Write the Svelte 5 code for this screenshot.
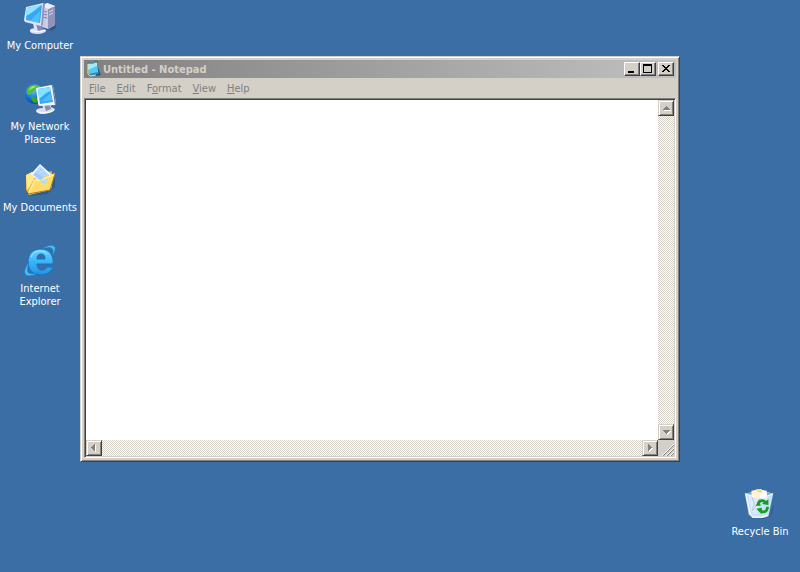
<script lang="ts">
	type Shortcut = { id: string; label: string };

	const shortcuts: Shortcut[] = [
		{ id: 'computer', label: 'My Computer' },
		{ id: 'network', label: 'My Network Places' },
		{ id: 'documents', label: 'My Documents' },
		{ id: 'explorer', label: 'Internet Explorer' }
	];

	// the access key is the underlined letter
	const menus = [
		{ before: '', key: 'F', after: 'ile' },
		{ before: '', key: 'E', after: 'dit' },
		{ before: 'F', key: 'o', after: 'rmat' },
		{ before: '', key: 'V', after: 'iew' },
		{ before: '', key: 'H', after: 'elp' }
	];

	let text = $state('');
</script>

{#snippet icon(id: string)}
	<svg class="icon" viewBox="0 0 32 32" aria-hidden="true">
		{#if id === 'computer'}
			<path d="M18 26l10 3 5-4v-3z" fill="#203d6c" opacity=".4" />
			<path d="M18 4l5-3 8 3v19l-7 4-6-2z" fill="#c9cce6" />
			<path d="M24 7l7-3v19l-7 4z" fill="#8f92ba" />
			<path d="M18 4l5-3 8 3-7 3z" fill="#eeeef9" />
			<path d="M19 9l4 1M19 12l4 1M19 15l4 1" stroke="#777ba8" />
			<path d="M25 10l4-2M25 13l4-2" stroke="#d9dbef" />
			<path d="M9 21l8 1 1 5 4 1c1 2-4 4-9 4-6 0-9-3-6-5l3-1z" fill="#dddff0" />
			<path d="M12 22l6 1 1 5-5 1z" fill="#8588b2" />
			<path d="M7 28c3 2 9 2 14 0" fill="none" stroke="#fff" />
			<path d="M2 5l17-4 2 1-2 21-2 1L1 20 0 18z" fill="#dfe2f4" />
			<path d="M19 1l2 1-2 21-2 1z" fill="#9195bd" />
			<path d="M3 6l15-3-2 18L2 18z" fill="#38a7f3" />
			<path d="M3 6l15-3C13 6 7 12 2 14z" fill="#8be6ff" />
			<path d="M6 19l10-10-1 12z" fill="#5acbff" opacity=".7" />
		{:else if id === 'network'}
			<defs>
				<radialGradient id="sea" cx=".4" cy=".3" r=".7">
					<stop offset="0" stop-color="#7cc4ff" />
					<stop offset=".5" stop-color="#1f80ea" />
					<stop offset="1" stop-color="#0b3f9c" />
				</radialGradient>
			</defs>
			<circle cx="11" cy="11" r="10" fill="url(#sea)" />
			<path d="M5 4c4-3 9-3 12 0l-2 1-4 1-1 3-3 1-1 2-3-1c-1-3 0-5 2-7z" fill="#4fc136" />
			<path d="M7 13l4 1 3 3-2 3c-3 0-5-3-5-7z" fill="#39a824" />
			<path d="M6 5c2-2 4-2 6-2l-2 2-3 1-2 2z" fill="#a8e672" />
			<path d="M18 21l8-2 1 5 4 2c0 4-17 8-19 2 0-2 3-3 7-3z" fill="#dcddeb" />
			<path d="M20 21l5-1 2 6-5 2z" fill="#8b8db0" />
			<path d="M13 28c4 3 13 2 17-1" fill="none" stroke="#fff" />
			<path d="M12 5l15-3 2 1 3 17-1 2-16 1-1-2z" fill="#f5f7fe" />
			<path d="M28 3l1 0 3 17-1 2z" fill="#6773a3" />
			<path d="M14 6l12-2 3 15-13 2z" fill="#35a7f2" />
			<path d="M14 6l12-2 1 4c-5 1-8 5-12 8z" fill="#83e2ff" />
			<path d="M17 19l10-9 1 7z" fill="#64c9ff" opacity=".6" />
		{:else if id === 'documents'}
			<path d="M4 29l22-2 5-15v11l-8 7-16 2z" fill="#203d6c" opacity=".4" />
			<path d="M2 11l6-3 5 2 15-3v17L5 30 2 26z" fill="#e4ac34" />
			<path d="M2 11l6-3 5 2-2 3-6 11-2 2z" fill="#ffe98f" />
			<path d="M16 0l12 11-5 14L7 10z" fill="#f7fbff" />
			<path d="M16 2l9 9-3 10L9 11z" fill="#a4d0f8" />
			<path d="M16 2l9 9-4 3-9-6z" fill="#b9dcfc" />
			<path d="M12 9l8 7M14 7l8 7M16 5l7 7" stroke="#8bbdf0" stroke-dasharray="1 1" />
			<path d="M4 29l6-14 7 1 3-3 11-4-5 17-21 5z" fill="#ffdc69" />
			<path d="M5 28l6-12 6 1 4-3 9-3" fill="none" stroke="#fff6b9" />
			<path d="M4 30l22-4 5-16" fill="none" stroke="#ad761b" />
			<path d="M15 17l9-2-3 6z" fill="#b2dfef" />
		{:else if id === 'explorer'}
			<defs>
				<linearGradient id="ie" x1="0" y1="0" x2="0" y2="1">
					<stop offset="0" stop-color="#6ad8ff" />
					<stop offset=".5" stop-color="#3bb4f8" />
					<stop offset="1" stop-color="#2090e4" />
				</linearGradient>
			</defs>
			<path
				d="M29 19H13c0 4 2 6 5 6 2 0 4-1 5-3h6c-2 5-6 8-12 8C9 30 4 25 4 17S9 4 17 4c8 0 13 6 12 15zM13 14h8c0-3-1-5-4-5s-4 2-4 5z"
				fill="url(#ie)"
				fill-rule="evenodd"
				stroke="#1672bd"
				stroke-width="1"
			/>
			<path
				d="M18 4C23 0 29-1 31 2c1 3-1 6-3 9 1-4 2-6-1-8-2-1-5 0-9 1zM5 17C1 22-1 28 2 30c3 2 9 0 12-2-5 1-9 1-10-1-1-2 0-6 1-10z"
				fill="#42bdf8"
				stroke="#1672bd"
				stroke-width=".5"
			/>
			<path d="M7 12c2-4 5-6 9-6 3 0 5 1 7 3" fill="none" stroke="#9be7ff" />
		{:else if id === 'recycle'}
			<g transform="scale(.94)">
				<path d="M9 30l15 2 6-5 2-12-4 15-8 3z" fill="#203d6c" opacity=".5" />
				<path d="M1 6L18 2l13 4-5 24-6 2H9l-4-4z" fill="#d1e2f2" />
				<path d="M2 6L18 2l12 4-9 4z" fill="#86acd3" />
				<path d="M8 3l9-2 3 5-5 10-7-5z" fill="#fff5d2" />
				<path d="M18 2l6 1 1 8-9 4z" fill="#fff" />
				<path d="M13 1l6 0v4l-5-1z" fill="#ffd778" />
				<path d="M4 8l7 2 5 9-3 10-5-4z" fill="#f5f4fa" />
				<path d="M8 9l3 7-2 8 5-6 3-7" fill="none" stroke="#aaa9cd" />
				<path d="M2 6l5 22 3 3h9l6-2 5-23-9 5-9-1z" fill="#c5e0f7" opacity=".5" />
				<path d="M1 6l11 4h9l10-4" fill="none" stroke="#f6fcff" />
				<path d="M2 7l5 21 3 3h9l6-2" fill="none" stroke="#fff" />
				<path d="M15 17c1-4 6-5 8-1M25 20c0 5-4 7-8 4" fill="none" stroke="#13a022" stroke-width="3" />
				<path d="M19 17l7 1V12zM19 21l-6 1 6 6zM12 19l4-5 2 5z" fill="#13a022" />
			</g>
		{/if}
	</svg>
{/snippet}

{#snippet shortcut(item: Shortcut)}
	<button class="shortcut">
		{@render icon(item.id)}
		<span>{item.label}</span>
	</button>
{/snippet}

{#snippet arrow(label: string, d: string)}
	<button class="bevel arrow" aria-label={label}>
		<svg viewBox="0 0 12 12">
			<path {d} fill="#fff" transform="translate(1 1)" />
			<path {d} fill="#808080" />
		</svg>
	</button>
{/snippet}

<div class="desktop">
	<nav class="shortcuts" aria-label="Desktop">
		{#each shortcuts as item (item.id)}
			{@render shortcut(item)}
		{/each}
	</nav>

	<main class="window">
		<header class="titlebar">
			<svg class="app-icon" viewBox="0 0 16 16" aria-hidden="true">
				<path d="M11 3l3 9 1 2-6 1z" fill="#24496a" />
				<path d="M2 2l9-1 2 12-9 2z" fill="#278ac4" />
				<path d="M2 2l9-1 1 10-9 2z" fill="#59c8f1" />
				<path d="M2 2l9-1v4L2 9z" fill="#a2eafa" />
				<path d="M2 3v10l2 2 6-1" fill="none" stroke="#e0dfae" />
				<path d="M3 1v2M5 1v2M7 1v2M9 0v2M11 0v2" stroke="#305365" />
			</svg>
			<h1>Untitled - Notepad</h1>
			<div class="controls">
				<button class="bevel control" aria-label="Minimize">
					<svg viewBox="0 0 12 10"><path d="M2 7h6v2H2z" /></svg>
				</button>
				<button class="bevel control" aria-label="Maximize">
					<svg viewBox="0 0 12 10"><path d="M1 0h9v9H1zM2 2v6h7V2z" fill-rule="evenodd" /></svg>
				</button>
				<button class="bevel control close" aria-label="Close">
					<svg viewBox="0 0 12 10">
						<path
							d="M2 1h2v1h1v1h2V2h1V1h2v1H9v1H8v1H7v1h1v1h1v1h1v1H8V7H7V6H5v1H4v1H2V7h1V6h1V5h1V4H4V3H3V2H2z"
						/>
					</svg>
				</button>
			</div>
		</header>

		<div class="menubar">
			{#each menus as menu}
				<button>{menu.before}<u>{menu.key}</u>{menu.after}</button>
			{/each}
		</div>

		<div class="editor">
			<textarea aria-label="Text" spellcheck="false" bind:value={text}></textarea>
			<div class="track vertical">
				{@render arrow('Scroll up', 'M6 4h1v1h1v1h1v1h1v1H3V7h1V6h1V5h1z')}
				{@render arrow('Scroll down', 'M3 4h7v1H9v1H8v1H7v1H6V7H5V6H4V5H3z')}
			</div>
			<div class="track">
				{@render arrow('Scroll left', 'M3 5h1V4h1V3h1V2h1v7H6V8H5V7H4V6H3z')}
				{@render arrow('Scroll right', 'M4 2h1v1h1v1h1v1h1v1H7v1H6v1H5v1H4z')}
			</div>
			<svg class="grip" viewBox="0 0 16 16" aria-hidden="true">
				<path d="M4 16L16 4M8 16l8-8M12 16l4-4" stroke="#fff" />
				<path d="M5 16L16 5M9 16l7-7M13 16l3-3" stroke="#808080" />
			</svg>
		</div>
	</main>

	<div class="bin">
		{@render shortcut({ id: 'recycle', label: 'Recycle Bin' })}
	</div>
</div>

<style>
	:global(body) {
		background: #3a6ea5;
	}

	.desktop {
		display: grid;
		grid-template-columns: 80px minmax(0, 1fr) 120px;
		height: 100vh;
		overflow: hidden;
		font-family: 'DejaVu Sans Condensed', Tahoma, 'DejaVu Sans', sans-serif;
		font-size: 11px;
		line-height: 13px;
	}

	button {
		margin: 0;
		padding: 0;
		border: 0;
		background: none;
		color: inherit;
		font: inherit;
	}

	.shortcuts {
		display: grid;
		grid-auto-rows: 81px;
		align-content: start;
	}

	.shortcut {
		display: flex;
		flex-direction: column;
		align-items: center;
		gap: 5px;
		width: 80px;
		height: 81px;
		padding: 2px 2px 0;
		color: #fff;
	}

	.icon {
		width: 32px;
		height: 32px;
		flex: none;
	}

	.window {
		display: flex;
		flex-direction: column;
		margin: 56px 0 110px;
		padding: 3px;
		border: 1px solid;
		border-color: #d4d0c8 #404040 #404040 #d4d0c8;
		box-shadow:
			inset 1px 1px #fff,
			inset -1px -1px #808080;
		background: #d4d0c8;
	}

	.titlebar {
		display: flex;
		align-items: center;
		height: 18px;
		background: linear-gradient(to right, #808080, #c0c0c0);
		color: #d4d0c8;
	}

	.app-icon {
		width: 16px;
		height: 16px;
		margin: 0 1px 0 2px;
	}

	h1 {
		flex: 1;
		margin: 0;
		font-size: 11px;
		font-weight: bold;
	}

	.controls {
		display: flex;
		margin-right: 2px;
	}

	.bevel {
		border: 1px solid;
		border-color: #fff #404040 #404040 #fff;
		background: #d4d0c8;
		box-shadow: inset -1px -1px #808080;
	}

	.control {
		width: 16px;
		height: 14px;
	}

	.control svg {
		display: block;
		width: 12px;
		height: 10px;
		margin: 1px;
	}

	.close {
		margin-left: 2px;
	}

	.menubar {
		display: flex;
		align-items: center;
		gap: 11px;
		height: 20px;
		padding-left: 5px;
		color: #808080;
	}

	.editor {
		flex: 1;
		display: grid;
		grid-template: minmax(0, 1fr) 16px / minmax(0, 1fr) 16px;
		border: 1px solid;
		border-color: #808080 #fff #fff #808080;
		padding: 1px;
		box-shadow: inset 1px 1px #404040;
	}

	textarea {
		display: block;
		width: 100%;
		height: 100%;
		box-sizing: border-box;
		border: 0;
		padding: 2px;
		outline: none;
		resize: none;
		background: #fff;
		font: 13px/16px 'Liberation Mono', monospace;
	}

	.track {
		display: flex;
		justify-content: space-between;
		background: repeating-conic-gradient(#fff 0 25%, #d4d0c8 0 50%) 0 0 / 2px 2px;
	}

	.vertical {
		flex-direction: column;
	}

	.arrow {
		width: 16px;
		height: 16px;
		border-color: #d4d0c8 #404040 #404040 #d4d0c8;
		box-shadow:
			inset 1px 1px #fff,
			inset -1px -1px #808080;
	}

	.arrow svg {
		display: block;
		width: 12px;
		height: 12px;
		margin: 1px;
	}

	.grip {
		width: 16px;
		height: 16px;
	}

	.bin {
		display: flex;
		align-items: flex-end;
		justify-content: flex-end;
		padding-bottom: 5px;
	}
</style>
